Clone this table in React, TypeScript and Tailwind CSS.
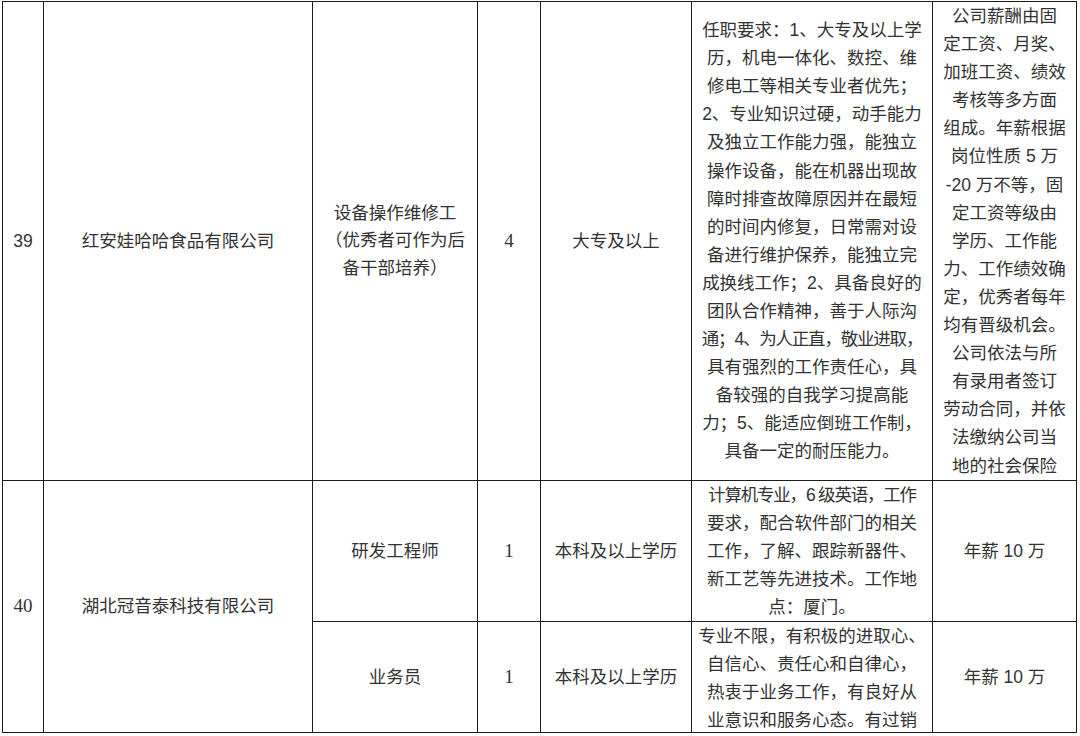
const req39 = [
  "任职要求：1、大专及以上学",
  "历，机电一体化、数控、维",
  "修电工等相关专业者优先；",
  "2、专业知识过硬，动手能力",
  "及独立工作能力强，能独立",
  "操作设备，能在机器出现故",
  "障时排查故障原因并在最短",
  "的时间内修复，日常需对设",
  "备进行维护保养，能独立完",
  "成换线工作；2、具备良好的",
  "团队合作精神，善于人际沟",
  "通；4、为人正直，敬业进取，",
  "具有强烈的工作责任心，具",
  "备较强的自我学习提高能",
  "力；5、能适应倒班工作制，",
  "具备一定的耐压能力。",
];

const pay39 = [
  "公司薪酬由固",
  "定工资、月奖、",
  "加班工资、绩效",
  "考核等多方面",
  "组成。年薪根据",
  "岗位性质 5 万",
  "-20 万不等，固",
  "定工资等级由",
  "学历、工作能",
  "力、工作绩效确",
  "定，优秀者每年",
  "均有晋级机会。",
  "公司依法与所",
  "有录用者签订",
  "劳动合同，并依",
  "法缴纳公司当",
  "地的社会保险",
];

const reqEngineer = [
  "计算机专业，6 级英语，工作",
  "要求，配合软件部门的相关",
  "工作，了解、跟踪新器件、",
  "新工艺等先进技术。工作地",
  "点：厦门。",
];

const reqSales = [
  "专业不限，有积极的进取心、",
  "自信心、责任心和自律心，",
  "热衷于业务工作，有良好从",
  "业意识和服务心态。有过销",
];

const cell = "border border-[#1c1c1c] p-0 text-center align-middle";
const serif = "font-['Liberation_Serif','Noto_Sans_CJK_SC',serif] text-[19px]";

// one div per printed line, so the wraps follow the source document;
// lines wider than 13 glyphs get squeezed like Word does with punctuation
const Lines = ({ lines }: { lines: string[] }) => (
  <div className="flex flex-col items-center">
    {lines.map((line, i) => (
      <div key={i} className={line.length > 13 ? "whitespace-nowrap tracking-[-1.2px]" : "whitespace-nowrap"}>
        {line}
      </div>
    ))}
  </div>
);

export default function App() {
  return (
    <div className="h-[736px] w-[1080px] overflow-hidden bg-white pl-[2px] pt-[1px] font-['Liberation_Sans','Noto_Sans_CJK_SC',sans-serif] text-[17.5px] leading-[28.1px] text-[#333]">
      <table className="w-[1074px] table-fixed border-collapse border border-[#444]">
        <colgroup>
          <col className="w-[41px]" />
          <col className="w-[269px]" />
          <col className="w-[165px]" />
          <col className="w-[63px]" />
          <col className="w-[151px]" />
          <col className="w-[241px]" />
          <col className="w-[144px]" />
        </colgroup>
        <tbody>
          <tr className="h-[478px]">
            <td className={cell}>39</td>
            <td className={cell}>红安娃哈哈食品有限公司</td>
            <td className={cell}>
              <div className="leading-[27.5px]">
                <Lines lines={["设备操作维修工", "（优秀者可作为后", "备干部培养）"]} />
              </div>
            </td>
            <td className={`${cell} ${serif}`}>4</td>
            <td className={cell}>大专及以上</td>
            <td className={cell}>
              <Lines lines={req39} />
            </td>
            <td className={cell}>
              <Lines lines={pay39} />
            </td>
          </tr>
          <tr className="h-[141px]">
            <td rowSpan={2} className={`${cell} ${serif}`}>
              40
            </td>
            <td rowSpan={2} className={cell}>
              湖北冠音泰科技有限公司
            </td>
            <td className={cell}>研发工程师</td>
            <td className={`${cell} ${serif}`}>1</td>
            <td className={cell}>本科及以上学历</td>
            <td className={cell}>
              <Lines lines={reqEngineer} />
            </td>
            <td className={cell}>年薪 10 万</td>
          </tr>
          <tr className="h-[111px]">
            <td className={cell}>业务员</td>
            <td className={`${cell} ${serif}`}>1</td>
            <td className={cell}>本科及以上学历</td>
            <td className={`${cell} align-top`}>
              <div className="h-[110px] overflow-hidden">
                <Lines lines={reqSales} />
              </div>
            </td>
            <td className={cell}>年薪 10 万</td>
          </tr>
        </tbody>
      </table>
    </div>
  );
}
